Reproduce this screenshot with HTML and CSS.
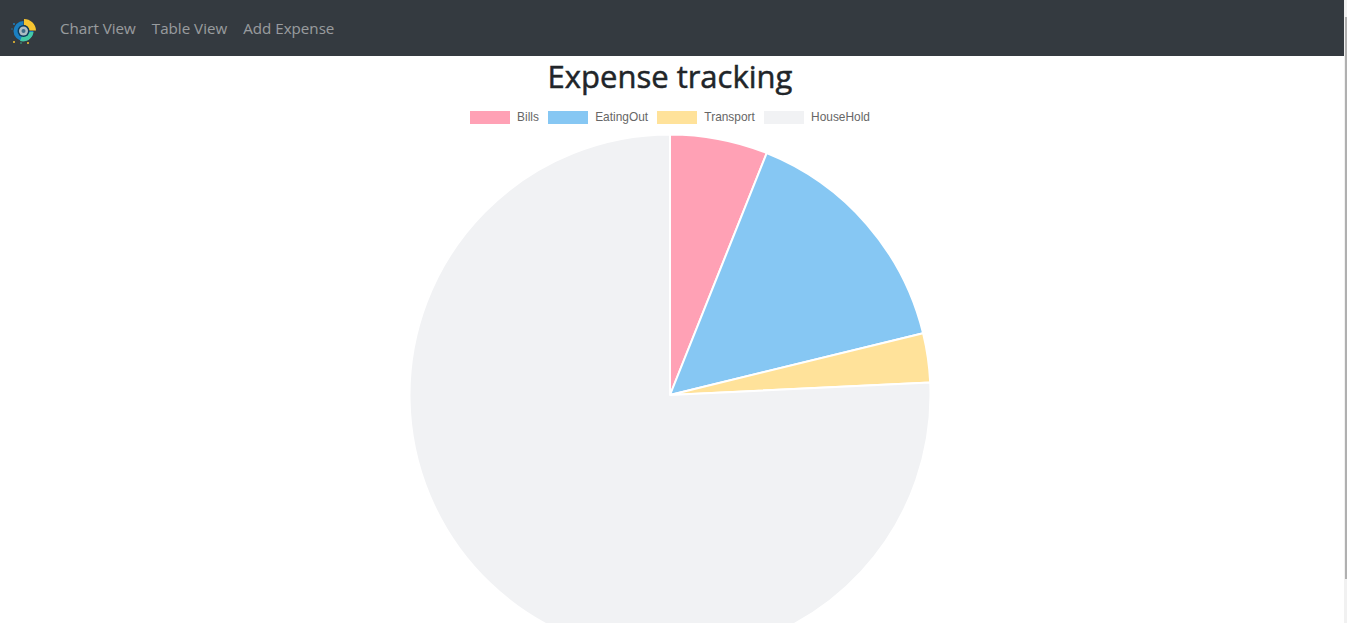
FILE: index.html
```html
<!DOCTYPE html>
<html lang="en">
  <head>
    <meta charset="UTF-8" />
    <meta name="viewport" content="width=device-width, initial-scale=1.0" />
    <title>Expense tracking</title>
    <link rel="stylesheet" href="styles.css">
  </head>
  <body>
    <div class="page">
      <nav class="navbar">
        <a class="brand" href="#">
          <svg width="30" height="30" viewBox="0 0 30 30">
            <path d="M15.5 16 L15.5 6 A10 10 0 1 0 25.5 16 Z" fill="#1b7fc0" />
            <path d="M16 4 A12 12 0 0 1 28 15.5 L21 15.5 A5.5 5.5 0 0 0 16 10 Z" fill="#f7c531" />
            <path d="M25.5 17 A10.5 10.5 0 0 1 12 26 L14 21 A5 5 0 0 0 20.5 17 Z" fill="#44c9a5" />
            <circle cx="15.5" cy="16" r="6" fill="#0e3c5c" />
            <circle cx="15.5" cy="16" r="4.5" fill="#aebcc4" />
            <circle cx="15.5" cy="16" r="2" fill="#3f6d88" />
            <circle cx="6" cy="9" r="1" fill="#1b7fc0" />
            <circle cx="4" cy="14" r="0.7" fill="#1b7fc0" />
            <circle cx="6" cy="27" r="1" fill="#f7c531" />
            <circle cx="20" cy="28" r="1" fill="#f7c531" />
            <circle cx="13" cy="28" r="0.7" fill="#44c9a5" />
          </svg>
        </a>
        <a class="nav-link" href="#">Chart View</a>
        <a class="nav-link" href="#">Table View</a>
        <a class="nav-link" href="#">Add Expense</a>
      </nav>
      <main class="content">
        <h1>Expense tracking</h1>
        <ul class="legend">
          <li><span class="swatch bills"></span>Bills</li>
          <li><span class="swatch eating"></span>EatingOut</li>
          <li><span class="swatch transport"></span>Transport</li>
          <li><span class="swatch household"></span>HouseHold</li>
        </ul>
        <svg class="pie" width="524" height="490" viewBox="-262 -262 524 490">
          <g stroke="#fff" stroke-width="2" stroke-linejoin="round">
            <path d="M0 0 L0 -260.5 A260.5 260.5 0 0 1 96.7 -241.9 Z" fill="#ffa1b5" />
            <path d="M0 0 L96.7 -241.9 A260.5 260.5 0 0 1 253.1 -61.7 Z" fill="#86c7f3" />
            <path d="M0 0 L253.1 -61.7 A260.5 260.5 0 0 1 260.2 -12.5 Z" fill="#ffe29a" />
            <path d="M0 0 L260.2 -12.5 A260.5 260.5 0 1 1 0 -260.5 Z" fill="#f1f2f4" />
          </g>
        </svg>
      </main>
    </div>
    <div class="scrollbar"><div class="thumb"></div></div>
  </body>
</html>
```

FILE: styles.css
```css
html,
body {
  height: 100%;
}

body {
  margin: 0;
  display: flex;
  overflow: hidden;
  background-color: #ffffff;
  color: #212529;
  font-family: "Open Sans", "Noto Sans", sans-serif;
}

.page {
  flex: 1;
  min-width: 0;
}

.navbar {
  display: flex;
  align-items: center;
  height: 56px;
  padding: 0 16px 0 8px;
  background-color: #343a40;
}

.brand {
  display: flex;
  margin-right: 14px;
  padding-top: 3px;
}

.nav-link {
  padding: 0 8px;
  color: rgba(255, 255, 255, 0.5);
  font-size: 15.15px;
  text-decoration: none;
}

.content {
  display: flex;
  flex-direction: column;
  align-items: center;
  padding-right: 4px;
}

h1 {
  margin: 0;
  font-size: 31px;
  font-weight: 400;
  line-height: 40px;
  -webkit-text-stroke: 0.5px #212529;
}

.legend {
  display: flex;
  gap: 9.3px;
  margin: 15px 0 0;
  padding: 0;
  list-style: none;
  color: #666666;
  font-family: "Liberation Sans", Arial, sans-serif;
  font-size: 11.9px;
  line-height: 13px;
}

.legend li {
  display: flex;
  align-items: center;
}

.swatch {
  width: 40px;
  height: 13px;
  margin-right: 7px;
}

.bills {
  background-color: #ffa1b5;
}

.eating {
  background-color: #86c7f3;
}

.transport {
  background-color: #ffe29a;
}

.household {
  background-color: #f1f2f4;
}

.pie {
  display: block;
  margin-top: 9px;
  flex: none;
}

.scrollbar {
  display: flex;
  flex-direction: column;
  align-items: flex-end;
  width: 3px;
  padding-top: 17px;
  background-color: #f1f1f1;
}

.thumb {
  width: 2px;
  height: 562px;
  background-color: #b0b0b0;
}
```
